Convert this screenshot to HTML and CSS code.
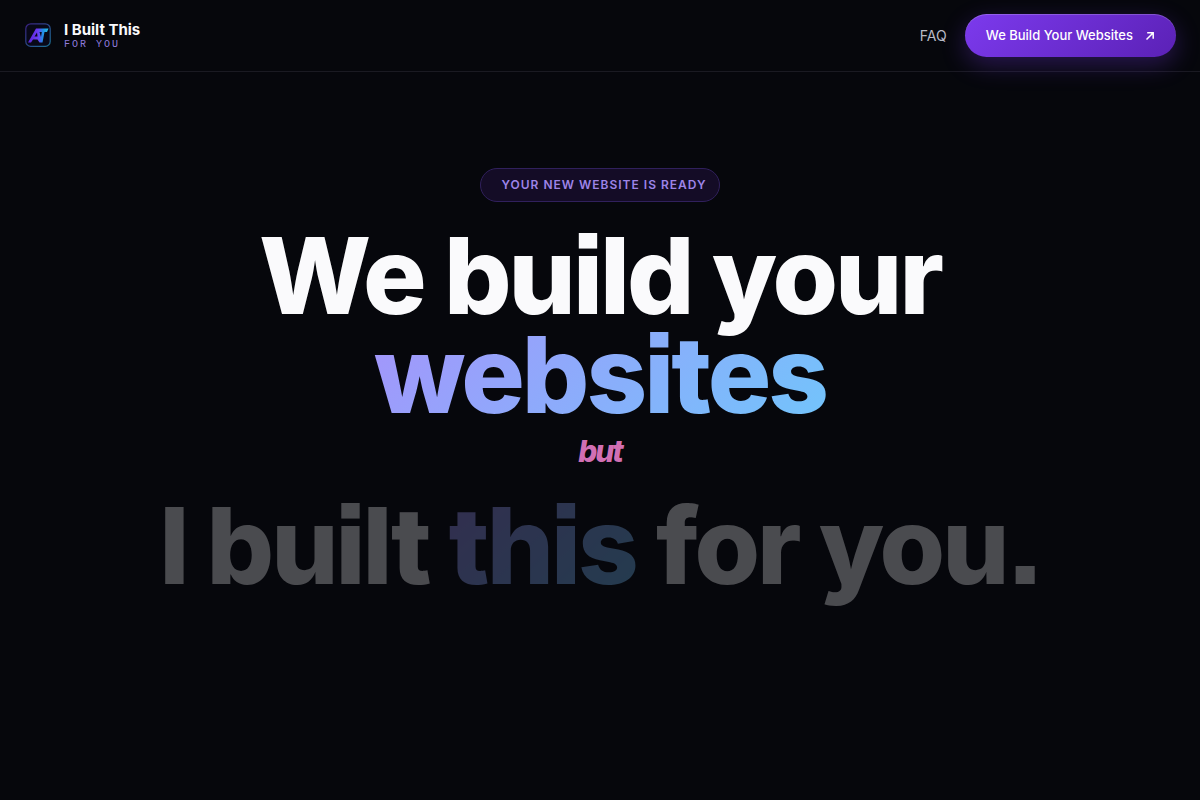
FILE: index.html
```html
<!DOCTYPE html>
<html lang="en">
<head>
  <meta charset="UTF-8">
  <title>I Built This For You</title>
  <meta name="viewport" content="width=device-width, initial-scale=1.0">
  <link rel="stylesheet" href="styles.css">
</head>
<body>
  <header class="site-header">
    <a class="brand" href="#">
      <svg class="brand-logo" viewBox="0 0 28 28" aria-hidden="true">
        <defs>
          <linearGradient id="logo" x1="0" y1="0" x2="1" y2="0">
            <stop offset="0" stop-color="#5b21d6"/>
            <stop offset="0.5" stop-color="#6d3df5"/>
            <stop offset="0.7" stop-color="#2588e8"/>
            <stop offset="1" stop-color="#22c3e6"/>
          </linearGradient>
          <linearGradient id="frame" x1="0" y1="0" x2="1" y2="1">
            <stop offset="0" stop-color="#3a2080"/>
            <stop offset="1" stop-color="#1b7296"/>
          </linearGradient>
        </defs>
        <rect x="1.8" y="1.8" width="24.4" height="22.6" rx="5" fill="#080818" stroke="url(#frame)" stroke-width="1.2"/>
        <path fill="url(#logo)" fill-rule="evenodd" d="M4 20.5 12 6.5h12.500l-1.500 3.500h-2.500L18.500 20.500h-3l-2-3H9l-2 3zM10.500 14.500h3l-.5-4zM15.500 10l1.500 5 .8-5z"/>
      </svg>
      <span class="brand-text">
        <span class="brand-name">I Built This</span>
        <span class="brand-sub">FOR YOU</span>
      </span>
    </a>
    <nav class="nav">
      <a class="nav-link" href="#faq">FAQ</a>
      <a class="nav-cta" href="#build">
        We Build Your Websites
        <svg class="arrow" viewBox="0 0 10 10" aria-hidden="true">
          <path d="M1.500 8.500 8 2M2.200 1.700h6v6" fill="none" stroke="currentColor" stroke-width="1.500"/>
        </svg>
      </a>
    </nav>
  </header>

  <main class="hero">
    <p class="badge">YOUR NEW WEBSITE IS READY</p>
    <h1 class="title">
      <span class="line">We build your</span>
      <span class="line"><span class="gradient">websites</span></span>
      <span class="but">but</span>
      <span class="line faded">I built <span class="gradient">this</span> for you.</span>
    </h1>
  </main>
</body>
</html>
```

FILE: styles.css
```css
* {
  box-sizing: border-box;
}
body {
  margin: 0;
  min-height: 100vh;
  background: #06070c;
  color: #fafafc;
  font-family: Inter, "Liberation Sans", sans-serif;
}
a {
  color: inherit;
  text-decoration: none;
}
.site-header {
  display: flex;
  align-items: center;
  justify-content: space-between;
  padding: 14px 24px;
  border-bottom: 1px solid #1a1a22;
}
.brand {
  display: flex;
  align-items: center;
  gap: 12px;
}
.brand-logo {
  width: 28px;
  height: 28px;
}
.brand-text {
  display: flex;
  flex-direction: column;
  padding-top: 2px;
}
.brand-name {
  font-size: 15px;
  font-weight: 700;
  line-height: 16px;
}
.brand-sub {
  color: #8f7bdc;
  font-family: "Liberation Mono", monospace;
  font-size: 10px;
  line-height: 14px;
  letter-spacing: 2px;
}
.nav {
  display: flex;
  align-items: center;
  gap: 18px;
}
.nav-link {
  color: #b9bac6;
  font-size: 14px;
}
.nav-cta {
  display: flex;
  align-items: center;
  gap: 12px;
  padding: 13px 21px;
  border-radius: 22px;
  background: linear-gradient(135deg, #7c3aed, #5b21b6);
  box-shadow: 0 8px 24px rgba(124, 58, 237, 0.3), inset 0 1px 0 rgba(255, 255, 255, 0.2);
  color: #fff;
  font-size: 13px;
  font-weight: 500;
  line-height: 17px;
}
.arrow {
  width: 10px;
  height: 10px;
}
.hero {
  padding: 96px 24px;
  text-align: center;
}
.badge {
  display: inline-block;
  margin: 0;
  padding: 8px 12px 8px 20px;
  border: 1px solid #30205c;
  border-radius: 17px;
  background: #140c26;
  color: #9d84e8;
  font-size: 12px;
  font-weight: 600;
  line-height: 16px;
  letter-spacing: 1px;
  vertical-align: top;
}
.title {
  margin: 24px 0 0;
  font-size: 106px;
  font-weight: 800;
  line-height: 99px;
  letter-spacing: -3px;
  font-feature-settings: "ss07";
}
.line {
  display: block;
}
.gradient {
  display: inline-block;
  background: linear-gradient(135deg, #a495fb, #72c4fb);
  background-clip: text;
  -webkit-background-clip: text;
  color: transparent;
}
.but {
  display: block;
  margin: 12px 0 30px;
  color: #d16fb4;
  font-size: 30px;
  font-style: italic;
  font-weight: 800;
  line-height: 30px;
  letter-spacing: -2px;
}
.faded {
  opacity: 0.28;
}
```
